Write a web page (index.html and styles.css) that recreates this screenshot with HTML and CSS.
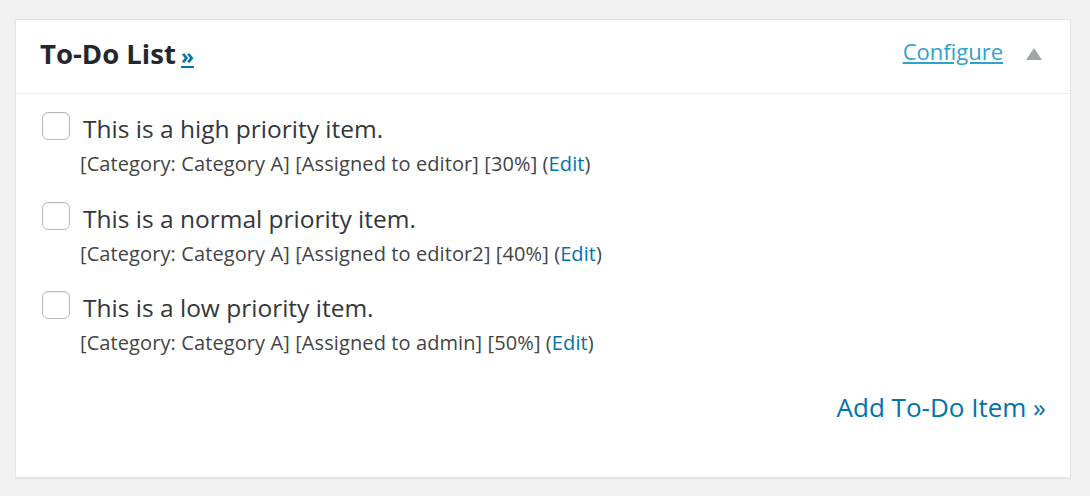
FILE: index.html
```html
<!DOCTYPE html>
<html>
<head>
<meta charset="utf-8">
<link rel="stylesheet" href="styles.css">
</head>
<body>
<div class="page">
  <div class="widget">
    <div class="widget-head">
      <h2 class="widget-title">To-Do List <a href="#" class="more">»</a></h2>
      <div class="head-actions">
        <a href="#" class="configure">Configure</a>
        <span class="toggle" aria-hidden="true"></span>
      </div>
    </div>
    <div class="widget-body">
      <ul class="todo-list">
        <li class="todo-item">
          <div class="todo-line"><span class="checkbox"></span><span class="todo-text">This is a high priority item.</span></div>
          <div class="todo-meta">[Category: Category A] [Assigned to editor] [30%] (<a href="#">Edit</a>)</div>
        </li>
        <li class="todo-item">
          <div class="todo-line"><span class="checkbox"></span><span class="todo-text">This is a normal priority item.</span></div>
          <div class="todo-meta">[Category: Category A] [Assigned to editor2] [40%] (<a href="#">Edit</a>)</div>
        </li>
        <li class="todo-item">
          <div class="todo-line"><span class="checkbox"></span><span class="todo-text">This is a low priority item.</span></div>
          <div class="todo-meta">[Category: Category A] [Assigned to admin] [50%] (<a href="#">Edit</a>)</div>
        </li>
      </ul>
      <div class="add-row"><a href="#" class="add-link">Add To-Do Item »</a></div>
    </div>
  </div>
</div>
</body>
</html>
```

FILE: styles.css
```css
html, body {
  margin: 0;
  padding: 0;
  background: #f1f1f1;
}
body {
  font-family: "Open Sans", "Liberation Sans", sans-serif;
  color: #444;
}
.page {
  padding: 19px 19px 18px 15px;
}
.widget {
  background: #fff;
  border: 1px solid #e5e5e5;
  box-shadow: 0 1px 1px rgba(0,0,0,0.04);
  height: 459px;
  box-sizing: border-box;
}
.widget-head {
  display: flex;
  align-items: flex-start;
  justify-content: space-between;
  padding: 16px 28px 0 24px;
  height: 74px;
  box-sizing: border-box;
  border-bottom: 1px solid #eee;
}
.widget-title {
  margin: 0;
  font-size: 27.5px;
  line-height: 36px;
  font-weight: 700;
  color: #23282d;
}
.widget-title .more {
  font-size: 21px;
  margin-left: -2px;
  color: #0073aa;
  font-weight: 700;
}
.head-actions {
  display: flex;
  align-items: center;
  gap: 23px;
  height: 36px;
  margin-top: -3px;
}
.configure {
  font-size: 22px;
  color: #2ea2cc;
  text-decoration: underline;
}
.toggle {
  width: 0;
  height: 0;
  border-left: 8px solid transparent;
  border-right: 8px solid transparent;
  border-bottom: 12px solid #a0a5aa;
  margin-top: 6px;
}
.widget-body {
  padding: 17px 24px 0 26px;
}
.todo-list {
  list-style: none;
  margin: 0;
  padding: 0;
}
.todo-item {
  margin: 0 0 24.5px 0;
}
.todo-item:last-child {
  margin-bottom: 0;
}
.todo-line {
  display: flex;
  align-items: flex-start;
  gap: 13px;
}
.checkbox {
  width: 26px;
  height: 26px;
  margin-top: 1px;
  border: 1px solid #b4b9be;
  border-radius: 6px;
  background: #fff;
  box-shadow: inset 0 1px 2px rgba(0,0,0,0.07);
  flex: none;
}
.todo-text {
  font-size: 24.5px;
  line-height: 30px;
  margin-top: 3px;
  color: #32373c;
}
.todo-meta {
  font-size: 20px;
  line-height: 24px;
  letter-spacing: 0.1px;
  margin: 8px 0 0 38px;
  color: #444;
}
.todo-meta a {
  color: #0073aa;
  text-decoration: none;
}
.add-row {
  display: flex;
  justify-content: flex-end;
  margin-top: 36px;
}
.add-link {
  font-size: 26px;
  line-height: 32px;
  color: #0073aa;
  text-decoration: none;
}
```
